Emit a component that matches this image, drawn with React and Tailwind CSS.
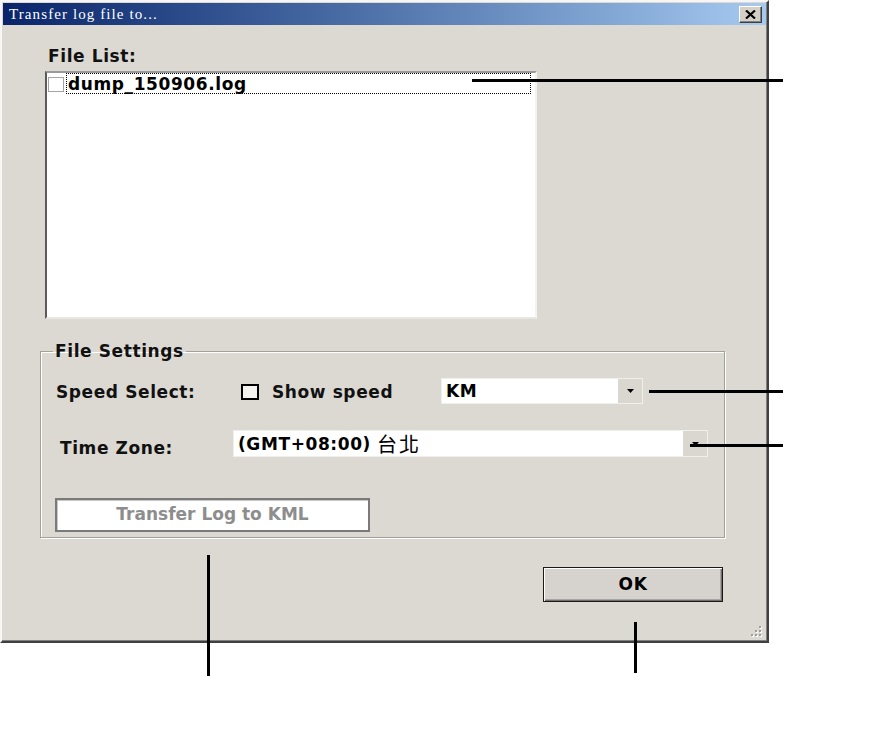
import React from 'react';

const ui = { fontFamily: '"DejaVu Sans", "Noto Sans CJK TC", sans-serif' };

function DropButton({ w = 'w-[24px]' }) {
  return (
    <div className={`${w} h-full bg-[#dad7d1] flex items-center justify-center`}>
      <svg width="7" height="4" viewBox="0 0 7 4"><path d="M0 0h7L3.5 4z" fill="#000" /></svg>
    </div>
  );
}

function Combo({ width, children }) {
  return (
    <div className={`${width} h-full bg-white border border-[#f1efeb] flex items-stretch`}>
      <div className="flex-1 flex items-center pl-[4px] pt-[2px] text-black font-bold text-[17px] tracking-[0.6px] whitespace-nowrap overflow-hidden">
        {children}
      </div>
      <DropButton />
    </div>
  );
}

export default function App() {
  return (
    <div className="relative w-[888px] h-[732px] bg-white overflow-hidden" style={ui}>
      {/* Dialog window */}
      <div className="w-[769px] h-[643px] bg-[#dcd9d3] border-2 border-l-[#f7f6f4] border-t-[#f7f6f4] border-r-[#404040] border-b-[#404040] shadow-[inset_-1px_-1px_0_#808080] p-[1px] flex flex-col">
        {/* Title bar */}
        <div className="h-[22px] shrink-0 flex items-center justify-between bg-linear-to-r from-[#0a246a] to-[#a6caf0]">
          <span className="pl-[6px] text-white text-[15px] tracking-[1.1px] leading-none" style={{ fontFamily: '"Liberation Serif", serif' }}>
            Transfer log file to...
          </span>
          <div className="mr-[4px] mt-[1px] w-[23px] h-[17px] bg-[#d4d0c8] border border-l-white border-t-white border-r-[#404040] border-b-[#404040] shadow-[inset_-1px_-1px_0_#808080] flex items-center justify-center">
            <svg width="11" height="9" viewBox="0 0 11 9">
              <path d="M1 0.5L10 8.5M10 0.5L1 8.5" stroke="#000" strokeWidth="2.2" />
            </svg>
          </div>
        </div>

        {/* Body */}
        <div className="flex-1 flex flex-col">
          <div className="mt-[21px] ml-[45px] h-[20px] leading-[20px] text-[17px] font-bold tracking-[0.6px] text-[#111]">File List:</div>

          {/* List box */}
          <div className="mt-[5px] ml-[42px] w-[492px] h-[248px] bg-white border-2 border-l-[#5a5a5a] border-t-[#9a9a9a] border-r-[#f4f3f1] border-b-[#e8e6e2]">
            <div className="flex items-start">
              <div className="mt-[4px] ml-[1px] w-[16px] h-[15px] border border-[#a3a3a3] bg-white" />
              <div className="ml-[2px] w-[465px] h-[21px] border border-dotted border-black">
                <div className="pl-[1px] pt-[1px] text-[17px] leading-[18px] font-bold tracking-[0.6px] text-black whitespace-nowrap">dump_150906.log</div>
              </div>
            </div>
          </div>

          {/* File Settings group */}
          <fieldset className="mt-[22px] ml-[37px] w-[685px] border border-[#a3a09b] shadow-[1px_1px_0_#fff,inset_1px_1px_0_#fff] px-[12px] pt-[17px] pb-[5px]">
            <legend className="px-[2px] h-[20px] leading-[20px] text-[17px] font-bold tracking-[0.6px] text-[#111]">File Settings</legend>

            <div className="h-[26px] flex items-center">
              <div className="w-[188px] pl-[3px] pt-[4px] text-[17px] font-bold tracking-[0.6px] text-[#111]">Speed Select:</div>
              <div className="mt-[2px] w-[18px] h-[16px] border-2 border-black bg-[#f4f3f0]" />
              <div className="ml-[13px] w-[169px] pt-[4px] text-[17px] font-bold tracking-[0.6px] text-[#111]">Show speed</div>
              <Combo width="w-[202px]">KM</Combo>
            </div>

            <div className="mt-[26px] h-[27px] flex items-center">
              <div className="w-[180px] pl-[7px] pt-[10px] text-[17px] font-bold tracking-[0.6px] text-[#111]">Time Zone:</div>
              <Combo width="w-[475px]">
                (GMT+08:00)<span className="ml-[6px] font-normal text-[20px] tracking-[2px]">台北</span>
              </Combo>
            </div>

            <div className="mt-[41px] ml-[2px] w-[315px] h-[34px] bg-white border-2 border-[#7a7a7a] shadow-[inset_1px_1px_0_#c8c8c8] flex items-center justify-center text-[17px] font-bold text-[#8d8d8d]">
              Transfer Log to KML
            </div>
          </fieldset>

          {/* OK */}
          <div className="mt-[29px] flex justify-end mr-[43px]">
            <div className="w-[180px] h-[35px] border border-[#1a1a1a] bg-[#d6d3ce] shadow-[inset_1px_1px_0_#fff,inset_-1px_-1px_0_#6e6e6e,inset_-2px_-2px_0_#a9a6a1] flex items-center justify-center text-[17px] font-bold tracking-[0.6px] text-black">
              OK
            </div>
          </div>

          {/* Size grip */}
          <div className="mt-auto flex justify-end pr-[3px] pb-[2px]">
            <svg width="13" height="13" viewBox="0 0 13 13">
              {[[9, 1], [5, 5], [9, 5], [1, 9], [5, 9], [9, 9]].map(([x, y]) => (
                <g key={`${x}-${y}`}>
                  <rect x={x + 1} y={y + 1} width="2" height="2" fill="#fff" />
                  <rect x={x} y={y} width="2" height="2" fill="#a09d98" />
                </g>
              ))}
            </svg>
          </div>
        </div>
      </div>

      {/* Callout lines */}
      <div className="absolute left-[472px] top-[79px] w-[311px] h-[3px] bg-black" />
      <div className="absolute left-[649px] top-[390px] w-[134px] h-[3px] bg-black" />
      <div className="absolute left-[690px] top-[444px] w-[93px] h-[3px] bg-black" />
      <div className="absolute left-[207px] top-[555px] w-[3px] h-[121px] bg-black" />
      <div className="absolute left-[634px] top-[622px] w-[3px] h-[51px] bg-black" />
    </div>
  );
}
